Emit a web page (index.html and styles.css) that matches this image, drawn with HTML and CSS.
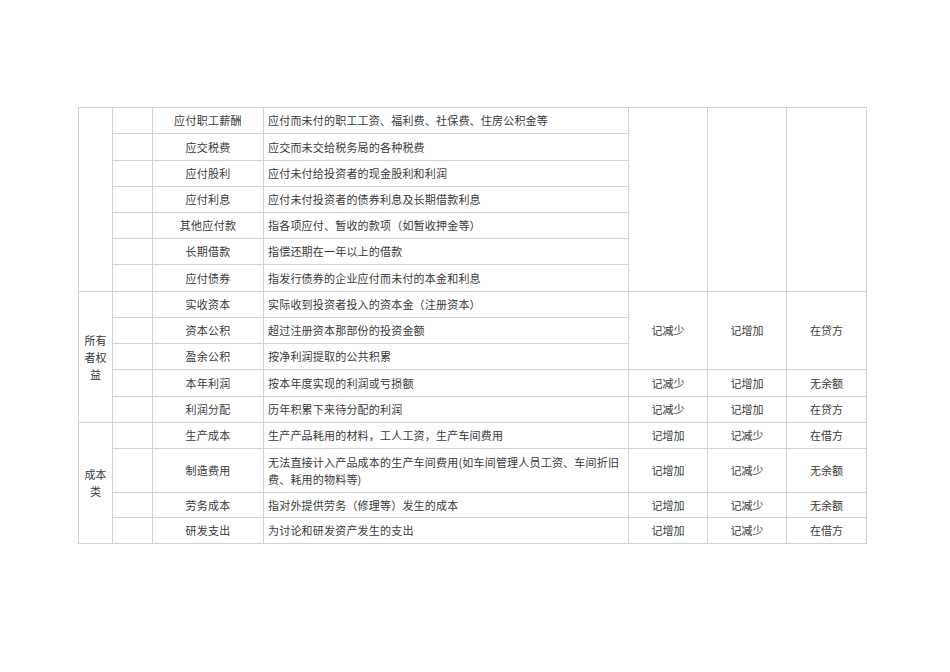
FILE: index.html
```html
<!DOCTYPE html>
<html lang="zh-CN">
<head>
<meta charset="utf-8">
<link rel="stylesheet" href="styles.css">
</head>
<body>
<table class="acct">
  <colgroup>
    <col class="c1"><col class="c2"><col class="c3"><col class="c4"><col class="c5"><col class="c6"><col class="c7">
  </colgroup>
  <tbody>
    <tr class="h26">
      <td rowspan="7" class="cat"></td><td></td><td class="name">应付职工薪酬</td><td class="desc">应付而未付的职工工资、福利费、社保费、住房公积金等</td>
      <td rowspan="7"></td><td rowspan="7"></td><td rowspan="7"></td>
    </tr>
    <tr class="h27"><td></td><td class="name">应交税费</td><td class="desc">应交而未交给税务局的各种税费</td></tr>
    <tr class="h26"><td></td><td class="name">应付股利</td><td class="desc">应付未付给投资者的现金股利和利润</td></tr>
    <tr class="h26"><td></td><td class="name">应付利息</td><td class="desc">应付未付投资者的债券利息及长期借款利息</td></tr>
    <tr class="h26"><td></td><td class="name">其他应付款</td><td class="desc">指各项应付、暂收的款项（如暂收押金等）</td></tr>
    <tr class="h26"><td></td><td class="name">长期借款</td><td class="desc">指偿还期在一年以上的借款</td></tr>
    <tr class="h27"><td></td><td class="name">应付债券</td><td class="desc">指发行债券的企业应付而未付的本金和利息</td></tr>

    <tr class="h26">
      <td rowspan="5" class="cat">所有<br>者权<br>益</td><td></td><td class="name">实收资本</td><td class="desc">实际收到投资者投入的资本金（注册资本）</td>
      <td rowspan="3" class="val">记减少</td><td rowspan="3" class="val">记增加</td><td rowspan="3" class="val">在贷方</td>
    </tr>
    <tr class="h26"><td></td><td class="name">资本公积</td><td class="desc">超过注册资本那部份的投资金额</td></tr>
    <tr class="h26"><td></td><td class="name">盈余公积</td><td class="desc">按净利润提取的公共积累</td></tr>
    <tr class="h27"><td></td><td class="name">本年利润</td><td class="desc">按本年度实现的利润或亏损额</td><td class="val">记减少</td><td class="val">记增加</td><td class="val">无余额</td></tr>
    <tr class="h26"><td></td><td class="name">利润分配</td><td class="desc">历年积累下来待分配的利润</td><td class="val">记减少</td><td class="val">记增加</td><td class="val">在贷方</td></tr>

    <tr class="h26">
      <td rowspan="5" class="cat cat-wide">成本<br>类</td><td></td><td class="name">生产成本</td><td class="desc">生产产品耗用的材料，工人工资，生产车间费用</td>
      <td class="val">记增加</td><td class="val">记减少</td><td class="val">在借方</td>
    </tr>
    <tr class="h44"><td></td><td class="name">制造费用</td><td class="desc">无法直接计入产品成本的生产车间费用(如车间管理人员工资、车间折旧<br>费、耗用的物料等)</td><td class="val">记增加</td><td class="val">记减少</td><td class="val">无余额</td></tr>
    <tr class="h25"><td></td><td class="name">劳务成本</td><td class="desc">指对外提供劳务（修理等）发生的成本</td><td class="val">记增加</td><td class="val">记减少</td><td class="val">无余额</td></tr>
    <tr class="h26"><td></td><td class="name">研发支出</td><td class="desc">为讨论和研发资产发生的支出</td><td class="val">记增加</td><td class="val">记减少</td><td class="val">在借方</td></tr>
  </tbody>
</table>
</body>
</html>
```

FILE: styles.css
```css
html, body {
  margin: 0;
  background: #ffffff;
}
body {
  padding: 107px 0 0 78px;
  font-family: "Noto Sans CJK SC", "Noto Sans", sans-serif;
  font-size: 11px;
  color: #3a3a3a;
}
.acct {
  border-collapse: collapse;
  table-layout: fixed;
  width: 788px;
}
.c1 { width: 34px; }
.c2 { width: 40px; }
.c3 { width: 111px; }
.c4 { width: 365px; }
.c5 { width: 79px; }
.c6 { width: 79px; }
.c7 { width: 80px; }
.acct td {
  border: 1px solid #d2d2d2;
  padding: 0 4px;
  line-height: 17px;
  vertical-align: middle;
  box-sizing: border-box;
}
.h25 td { height: 25px; }
.h26 td { height: 26px; }
.h27 td { height: 27px; }
.h44 td { height: 44px; }
.acct td[rowspan] { height: auto; }
.name, .val, .cat { text-align: center; }
.desc { text-align: left; letter-spacing: 0.2px; }
.cat { line-height: 16.5px; padding: 0 2px; }
.cat-wide { line-height: 24px; }
.name { letter-spacing: 0.3px; }
```
